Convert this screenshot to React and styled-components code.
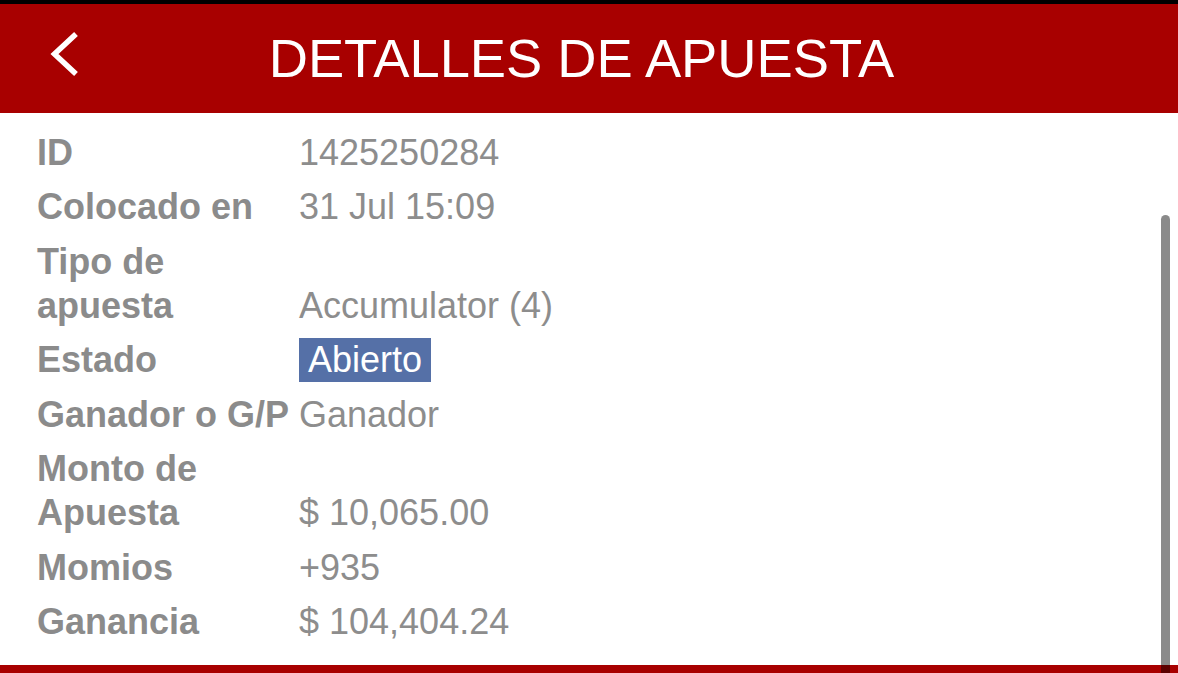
import React from "react";
import styled, { createGlobalStyle } from "styled-components";

const GlobalStyle = createGlobalStyle`
  html, body {
    margin: 0;
    padding: 0;
    background: #ffffff;
    font-family: "Liberation Sans", Arial, sans-serif;
  }
  * { box-sizing: border-box; }
`;

const Screen = styled.div`
  position: relative;
  width: 1178px;
  height: 673px;
  overflow: hidden;
  display: flex;
  flex-direction: column;
  background: #ffffff;
`;

const StatusStrip = styled.div`
  height: 4px;
  background: #000000;
  flex: none;
`;

const Header = styled.header`
  flex: none;
  height: 109px;
  background: #a80000;
  display: grid;
  grid-template-columns: 120px 1fr 135px;
  align-items: center;
`;

const BackButton = styled.button`
  border: 0;
  background: transparent;
  padding: 27px 0 0 48px;
  margin: 0;
  height: 100%;
  display: flex;
  align-items: flex-start;
  cursor: pointer;
`;

const Title = styled.h1`
  margin: 0;
  text-align: center;
  color: #ffffff;
  font-family: "Liberation Sans", Arial, sans-serif;
  font-weight: 400;
  font-size: 54.3px;
  line-height: 60px;
  letter-spacing: 0;
  white-space: nowrap;
`;

const Content = styled.main`
  flex: 1;
  padding: 12.5px 0 0 37px;
  overflow: hidden;
`;

const Row = styled.div`
  display: grid;
  grid-template-columns: 262px 1fr;
  align-items: end;
  padding: 5.25px 0;
`;

const Label = styled.div`
  font-weight: 700;
  font-size: 36px;
  line-height: 44px;
  color: #8b8b8b;
`;

const Value = styled.div`
  font-weight: 400;
  font-size: 36px;
  line-height: 44px;
  color: #8d8d8d;
  white-space: nowrap;
`;

const Badge = styled.span`
  display: inline-block;
  background: #5570a7;
  color: #ffffff;
  padding: 0 9px;
  line-height: 44px;
`;

const FooterStrip = styled.div`
  flex: none;
  height: 8px;
  background: #a80000;
`;

const Scrollbar = styled.div`
  position: absolute;
  right: 8px;
  top: 215px;
  bottom: 0;
  width: 9px;
  border-radius: 5px 5px 0 0;
  background: rgba(0, 0, 0, 0.46);
`;

const ChevronLeft = () => (
  <svg width="32" height="46" viewBox="0 0 32 46" aria-hidden="true">
    <polyline
      points="28,3 6.5,23 28,43"
      fill="none"
      stroke="#ffffff"
      strokeWidth="5.5"
      strokeLinejoin="miter"
      strokeLinecap="butt"
    />
  </svg>
);

const rows = [
  { label: "ID", value: "1425250284" },
  { label: "Colocado en", value: "31 Jul 15:09" },
  { label: "Tipo de apuesta", value: "Accumulator (4)" },
  { label: "Estado", value: "Abierto", badge: true },
  { label: "Ganador o G/P", value: "Ganador" },
  { label: "Monto de Apuesta", value: "$ 10,065.00" },
  { label: "Momios", value: "+935" },
  { label: "Ganancia", value: "$ 104,404.24" },
];

export default function App() {
  return (
    <>
      <GlobalStyle />
      <Screen>
        <StatusStrip />
        <Header>
          <BackButton aria-label="Volver">
            <ChevronLeft />
          </BackButton>
          <Title>DETALLES DE APUESTA</Title>
          <span />
        </Header>
        <Content>
          {rows.map((r) => (
            <Row key={r.label}>
              <Label>{r.label}</Label>
              <Value>{r.badge ? <Badge>{r.value}</Badge> : r.value}</Value>
            </Row>
          ))}
        </Content>
        <FooterStrip />
        <Scrollbar />
      </Screen>
    </>
  );
}
